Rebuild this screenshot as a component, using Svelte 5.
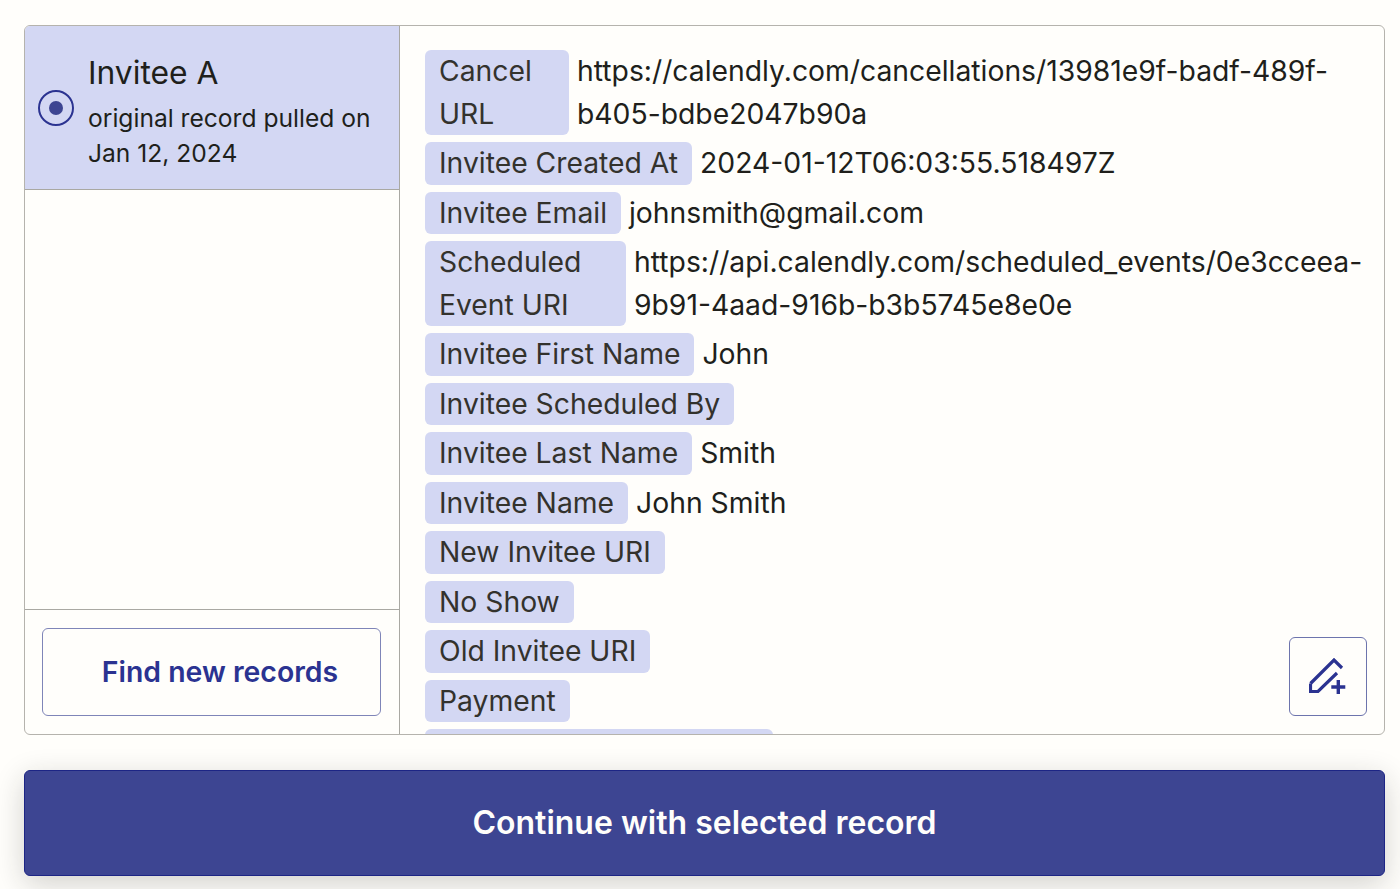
<script lang="ts">
  const fields = [
    { label: "Cancel URL", value: "https://calendly.com/cancellations/13981e9f-badf-489f-b405-bdbe2047b90a", width: 144 },
    { label: "Invitee Created At", value: "2024-01-12T06:03:55.518497Z" },
    { label: "Invitee Email", value: "johnsmith@gmail.com" },
    { label: "Scheduled Event URI", value: "https://api.calendly.com/scheduled_events/0e3cceea-9b91-4aad-916b-b3b5745e8e0e", width: 201 },
    { label: "Invitee First Name", value: "John" },
    { label: "Invitee Scheduled By", value: "" },
    { label: "Invitee Last Name", value: "Smith" },
    { label: "Invitee Name", value: "John Smith" },
    { label: "New Invitee URI", value: "" },
    { label: "No Show", value: "" },
    { label: "Old Invitee URI", value: "" },
    { label: "Payment", value: "" },
    { label: "Questions And Answers", value: "" }
  ];
</script>

<main class="page">
  <section class="card">
    <aside class="sidebar">
      <div class="record">
        <span class="radio"><span class="radio-dot"></span></span>
        <div class="record-text">
          <div class="record-title">Invitee A</div>
          <div class="record-sub">original record pulled on Jan 12, 2024</div>
        </div>
      </div>
      <div class="sidebar-foot">
        <button class="find">Find new records</button>
      </div>
    </aside>

    <div class="details">
      <div class="rows">
        {#each fields as field}
          <div class="row">
            <span class="label" style:width={field.width ? `${field.width}px` : null}>{field.label}</span>
            {#if field.value}
              <span class="value">{field.value}</span>
            {/if}
          </div>
        {/each}
      </div>
      <button class="edit" aria-label="Edit">
        <svg width="38" height="38" viewBox="0 0 38 38" fill="none" stroke="#2b3391" stroke-width="3.2">
          <path d="M1.5 25.5 L25 2 L33 10" />
          <path d="M28 15 L9 33.5 L1.5 33.5 V25.5" />
          <path d="M29.3 22 V36 M22.3 29 H36.3" stroke-width="3.4" />
        </svg>
      </button>
    </div>
  </section>

  <button class="continue">Continue with selected record</button>
</main>

<style>
  :global(body) {
    background: #fffefb;
    font-family: Inter, "Liberation Sans", sans-serif;
    color: #201f1b;
  }

  .page {
    display: flex;
    flex-direction: column;
    gap: 35px;
    height: 889px;
    box-sizing: border-box;
    padding: 25px 15px 0 24px;
    overflow: hidden;
  }

  .card {
    display: flex;
    height: 710px;
    box-sizing: border-box;
    border: 1.5px solid #b5b3ad;
    border-radius: 6px;
    overflow: hidden;
  }

  .sidebar {
    display: flex;
    flex-direction: column;
    flex: none;
    width: 374px;
    border-right: 1.5px solid #a9a8a2;
  }

  .record {
    display: flex;
    align-items: center;
    gap: 14px;
    height: 164px;
    box-sizing: border-box;
    padding: 0 13px;
    background: #d3d7f3;
    border-bottom: 1.5px solid #a9a8a2;
  }

  .radio {
    display: grid;
    flex: none;
    place-items: center;
    width: 36px;
    height: 36px;
    box-sizing: border-box;
    border: 2.5px solid #2b3391;
    border-radius: 50%;
  }

  .radio-dot {
    width: 14px;
    height: 14px;
    border-radius: 50%;
    background: #3d4592;
  }

  .record-title {
    padding-top: 8px;
    font-size: 31.8px;
    line-height: 42px;
  }

  .record-sub {
    margin-top: 7px;
    font-size: 24.6px;
    line-height: 35px;
  }

  .sidebar-foot {
    margin-top: auto;
    padding: 18px 18px 18px 17px;
    border-top: 1.5px solid #a9a8a2;
  }

  .find {
    display: block;
    width: 100%;
    height: 88px;
    padding: 0 0 2px 17px;
    border: 1.5px solid #7f85b8;
    border-radius: 6px;
    background: transparent;
    color: #2b3391;
    font: 600 28.4px Inter, sans-serif;
  }

  .details {
    position: relative;
    flex: 1;
    min-width: 0;
    overflow: hidden;
  }

  .rows {
    display: flex;
    flex-direction: column;
    gap: 7px;
    padding: 24.4px 18px 0 25px;
  }

  .row {
    display: flex;
    align-items: flex-start;
    gap: 8px;
    font-size: 28.3px;
    line-height: 42.5px;
  }

  .label {
    flex: none;
    box-sizing: border-box;
    padding: 0 14px;
    border-radius: 6px;
    background: #d3d7f3;
    color: #33322d;
  }

  .value {
    flex: 1;
    min-width: 0;
    color: #201f1b;
  }

  .edit {
    position: absolute;
    right: 17px;
    bottom: 18px;
    display: grid;
    place-items: center;
    width: 78px;
    height: 79px;
    padding: 0;
    border: 1.5px solid #6d74ad;
    border-radius: 6px;
    background: #fffefb;
  }

  .continue {
    flex: none;
    height: 106px;
    padding: 0 0 2px;
    border: 1px solid #1d2585;
    border-radius: 6px;
    background: #3d4592;
    color: #fffefb;
    font: 600 32px Inter, sans-serif;
    box-shadow: 0 8px 30px rgba(32, 31, 27, 0.2);
  }
</style>
